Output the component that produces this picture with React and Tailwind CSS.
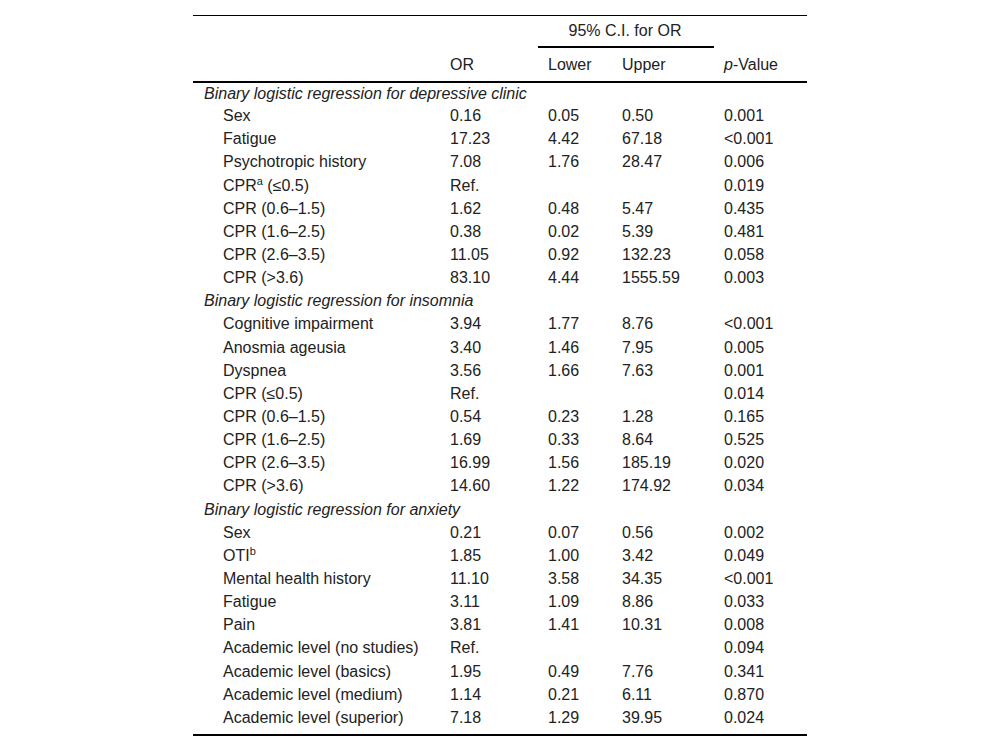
import React from "react";

const sup = (t) => <sup className="text-[11px]">{t}</sup>;

const sections = [
  {
    title: "Binary logistic regression for depressive clinic",
    rows: [
      ["Sex", "0.16", "0.05", "0.50", "0.001"],
      ["Fatigue", "17.23", "4.42", "67.18", "<0.001"],
      ["Psychotropic history", "7.08", "1.76", "28.47", "0.006"],
      [<>CPR{sup("a")} (≤0.5)</>, "Ref.", "", "", "0.019"],
      ["CPR (0.6–1.5)", "1.62", "0.48", "5.47", "0.435"],
      ["CPR (1.6–2.5)", "0.38", "0.02", "5.39", "0.481"],
      ["CPR (2.6–3.5)", "11.05", "0.92", "132.23", "0.058"],
      ["CPR (>3.6)", "83.10", "4.44", "1555.59", "0.003"],
    ],
  },
  {
    title: "Binary logistic regression for insomnia",
    rows: [
      ["Cognitive impairment", "3.94", "1.77", "8.76", "<0.001"],
      ["Anosmia ageusia", "3.40", "1.46", "7.95", "0.005"],
      ["Dyspnea", "3.56", "1.66", "7.63", "0.001"],
      ["CPR (≤0.5)", "Ref.", "", "", "0.014"],
      ["CPR (0.6–1.5)", "0.54", "0.23", "1.28", "0.165"],
      ["CPR (1.6–2.5)", "1.69", "0.33", "8.64", "0.525"],
      ["CPR (2.6–3.5)", "16.99", "1.56", "185.19", "0.020"],
      ["CPR (>3.6)", "14.60", "1.22", "174.92", "0.034"],
    ],
  },
  {
    title: "Binary logistic regression for anxiety",
    rows: [
      ["Sex", "0.21", "0.07", "0.56", "0.002"],
      [<>OTI{sup("b")}</>, "1.85", "1.00", "3.42", "0.049"],
      ["Mental health history", "11.10", "3.58", "34.35", "<0.001"],
      ["Fatigue", "3.11", "1.09", "8.86", "0.033"],
      ["Pain", "3.81", "1.41", "10.31", "0.008"],
      ["Academic level (no studies)", "Ref.", "", "", "0.094"],
      ["Academic level (basics)", "1.95", "0.49", "7.76", "0.341"],
      ["Academic level (medium)", "1.14", "0.21", "6.11", "0.870"],
      ["Academic level (superior)", "7.18", "1.29", "39.95", "0.024"],
    ],
  },
];

export default function App() {
  return (
    <div className="w-[1000px] h-[751px] bg-white font-['Liberation_Sans',Arial,sans-serif] text-[16px] leading-[20px] text-[#222]">
      <div className="pt-[15px] pl-[193px]">
        <table className="w-[614px] border-collapse table-fixed">
          <colgroup>
            <col className="w-[247px]" />
            <col className="w-[98px]" />
            <col className="w-[74px]" />
            <col className="w-[102px]" />
            <col className="w-[93px]" />
          </colgroup>
          <thead>
            <tr className="h-[33px] border-t border-black">
              <th colSpan={2}></th>
              <th colSpan={2} className="p-0 align-middle">
                <div className="h-[31px] flex items-center justify-center border-b-2 border-black font-normal pr-[2px]">
                  95% C.I. for OR
                </div>
              </th>
              <th></th>
            </tr>
            <tr className="h-[33px] border-b-2 border-black">
              <th></th>
              <th className="text-left font-normal pl-[10px]">OR</th>
              <th className="text-left font-normal pl-[10px]">Lower</th>
              <th className="text-left font-normal pl-[10px]">Upper</th>
              <th className="text-left font-normal pl-[10px]">
                <i>p</i>-Value
              </th>
            </tr>
          </thead>
          <tbody>
            {sections.map((s, si) => (
              <React.Fragment key={si}>
                <tr className="h-[23.15px]">
                  <td colSpan={5} className="pl-[11px] italic p-0 whitespace-nowrap">
                    {s.title}
                  </td>
                </tr>
                {s.rows.map((r, ri) => (
                  <tr key={ri} className="h-[23.15px]">
                    <td className="pl-[30px] py-0 whitespace-nowrap">{r[0]}</td>
                    <td className="pl-[10px] py-0">{r[1]}</td>
                    <td className="pl-[10px] py-0">{r[2]}</td>
                    <td className="pl-[10px] py-0">{r[3]}</td>
                    <td className="pl-[10px] py-0">{r[4]}</td>
                  </tr>
                ))}
              </React.Fragment>
            ))}
            <tr className="h-[6px] border-b-2 border-black">
              <td colSpan={5}></td>
            </tr>
          </tbody>
        </table>
      </div>
    </div>
  );
}
